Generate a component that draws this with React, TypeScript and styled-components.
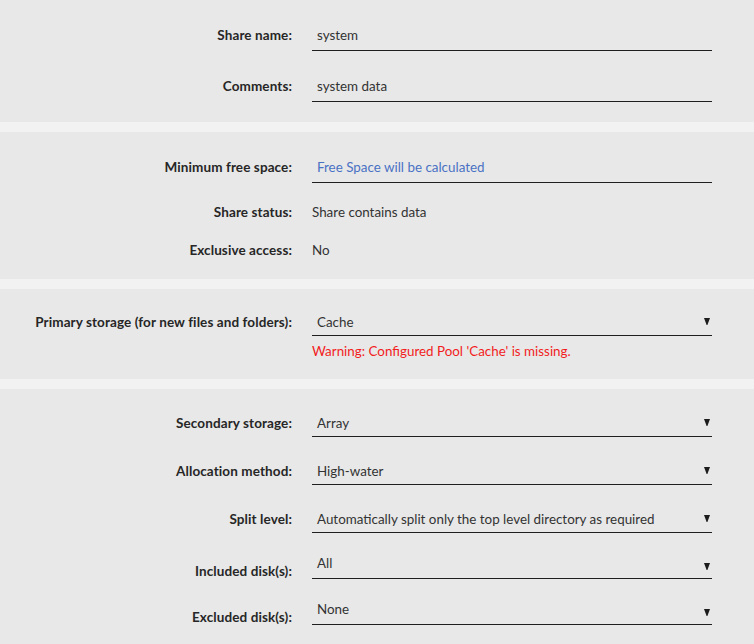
import styled, { createGlobalStyle } from "styled-components";

const GlobalStyle = createGlobalStyle`
  html, body {
    margin: 0;
    padding: 0;
    background: #f2f2f2;
  }
  body {
    font-family: Lato, "Noto Sans", sans-serif;
    font-size: 13.4px;
    color: #333;
  }
`;

type RowProps = {
  label: string;
  mt?: number;
  align?: "center" | "end";
  children: React.ReactNode;
};

function FormRow({ label, mt = 0, align = "center", children }: RowProps) {
  return (
    <Row $mt={mt} $align={align}>
      <Label>{label}</Label>
      <div>{children}</div>
    </Row>
  );
}

function Arrow() {
  return (
    <ArrowIcon width="6" height="7" viewBox="0 0 6 7">
      <polygon points="0,0 6,0 3.4,7 2.6,7" fill="#1c1c1c" />
    </ArrowIcon>
  );
}

function App() {
  return (
    <>
      <GlobalStyle />
      <Page>
        <Section $pt={19} $pb={20}>
          <FormRow label="Share name:">
            <TextField>system</TextField>
          </FormRow>
          <FormRow label="Comments:" mt={19}>
            <TextField>system data</TextField>
          </FormRow>
        </Section>

        <Section $pt={19} $pb={13}>
          <FormRow label="Minimum free space:">
            <TextField $hint>Free Space will be calculated</TextField>
          </FormRow>
          <FormRow label="Share status:" mt={13}>
            <Static>Share contains data</Static>
          </FormRow>
          <FormRow label="Exclusive access:" mt={6}>
            <Static>No</Static>
          </FormRow>
        </Section>

        <Section $pt={18} $pb={20}>
          <Row $mt={0} $align="start">
            <Label $lh={31}>Primary storage (for new files and folders):</Label>
            <div>
              <Select>
                Cache
                <Arrow />
              </Select>
              <Warning>Warning: Configured Pool 'Cache' is missing.</Warning>
            </div>
          </Row>
        </Section>

        <Section $pt={19} $pb={20}>
          <FormRow label="Secondary storage:">
            <Select>
              Array
              <Arrow />
            </Select>
          </FormRow>
          <FormRow label="Allocation method:" mt={19}>
            <Select>
              High-water
              <Arrow />
            </Select>
          </FormRow>
          <FormRow label="Split level:" mt={19}>
            <Select>
              Automatically split only the top level directory as required
              <Arrow />
            </Select>
          </FormRow>
          <FormRow label="Included disk(s):" mt={17} align="end">
            <MultiSelect>
              All
              <Arrow />
            </MultiSelect>
          </FormRow>
          <FormRow label="Excluded disk(s):" mt={17} align="end">
            <MultiSelect>
              None
              <Arrow />
            </MultiSelect>
          </FormRow>
        </Section>
      </Page>
    </>
  );
}

export default App;

const Page = styled.div`
  display: flex;
  flex-direction: column;
  gap: 10px;
  width: 754px;
`;

const Section = styled.section<{ $pt: number; $pb: number }>`
  background: #e8e8e8;
  display: flex;
  flex-direction: column;
  padding-top: ${(p) => p.$pt}px;
  padding-bottom: ${(p) => p.$pb}px;
`;

const Row = styled.div<{ $mt: number; $align: string }>`
  display: grid;
  grid-template-columns: 292px 400px;
  column-gap: 20px;
  align-items: ${(p) => p.$align};
  margin-top: ${(p) => p.$mt}px;
`;

const Label = styled.div<{ $lh?: number }>`
  text-align: right;
  font-size: 13.5px;
  font-weight: 700;
  letter-spacing: 0.1px;
  color: #262626;
  line-height: ${(p) => (p.$lh ? `${p.$lh}px` : "16px")};
  white-space: nowrap;
`;

const TextField = styled.div<{ $hint?: boolean }>`
  box-sizing: border-box;
  height: 32px;
  padding: 0 5px;
  display: flex;
  align-items: center;
  border-bottom: 1px solid #1f1f1f;
  color: ${(p) => (p.$hint ? "#4a72c4" : "#333")};
`;

const Static = styled.div`
  height: 32px;
  display: flex;
  align-items: center;
  color: #333;
`;

const Select = styled.div`
  box-sizing: border-box;
  height: 29px;
  padding: 1px 2px 0 5px;
  display: flex;
  align-items: center;
  justify-content: space-between;
  border-bottom: 1px solid #1f1f1f;
  color: #333;
`;

const MultiSelect = styled(Select)`
  align-items: flex-start;
  padding-top: 5px;
  line-height: 16px;

  svg {
    margin-top: 8px;
  }
`;

const ArrowIcon = styled.svg`
  flex: none;
  display: block;
`;

const Warning = styled.div`
  margin-top: 7px;
  line-height: 16px;
  color: #f21d1d;
`;
